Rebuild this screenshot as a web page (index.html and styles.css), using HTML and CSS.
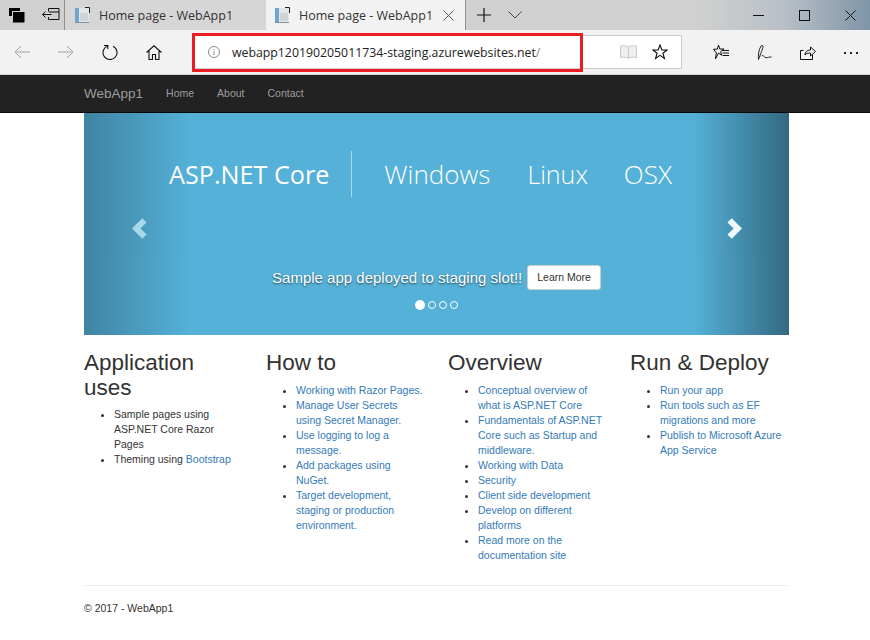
FILE: index.html

```html
<!DOCTYPE html>
<html lang="en">
<head>
    <meta charset="UTF-8">
    <title>Home page - WebApp1</title>
    <link rel="stylesheet" href="styles.css">
</head>
<body>
    <div class="tabstrip">
        <div class="strip-btns">
            <svg class="icon" width="18" height="16" viewBox="0 0 18 16"><rect x="1" y="1" width="11" height="8" fill="#000"/><path d="M4.500 4.500h12v11h-12z" fill="#000"/><path d="M4 4.500h13M4.500 4v11" stroke="#cfcfcf"/></svg>
            <svg class="icon" width="18" height="14" viewBox="0 0 18 14"><path d="M6.500 3.500V.5h10.500v11H6.500V9M7 4h10M.5 6.500h9M3.500 3.500l-3 3 3 3" fill="none" stroke="#111"/></svg>
        </div>
        <div class="tab">
            <svg class="favicon" width="16" height="16" viewBox="0 0 16 16"><rect x="1" y="1" width="14" height="14" fill="#e4e6e8"/><rect x="1" y="1" width="4" height="14" fill="#6fa6cf"/><rect x="6" y="6" width="8" height="8" fill="#cfd4d8"/><path d="M11 .5h4.500V6" fill="none" stroke="#222"/><path d="M1 15.500h14" stroke="#8a8f94"/></svg>
            <span class="tab-title">Home page - WebApp1</span>
        </div>
        <div class="tab tab-active">
            <svg class="favicon" width="16" height="16" viewBox="0 0 16 16"><rect x="1" y="1" width="14" height="14" fill="#e4e6e8"/><rect x="1" y="1" width="4" height="14" fill="#6fa6cf"/><rect x="6" y="6" width="8" height="8" fill="#cfd4d8"/><path d="M11 .5h4.500V6" fill="none" stroke="#222"/><path d="M1 15.500h14" stroke="#8a8f94"/></svg>
            <span class="tab-title">Home page - WebApp1</span>
            <svg class="tab-close" width="11" height="11" viewBox="0 0 11 11"><path d="M.5.5l10 10M10.500.5l-10 10" stroke="#555" fill="none"/></svg>
        </div>
        <div class="strip-new">
            <svg width="14" height="14" viewBox="0 0 14 14"><path d="M7 0v14M0 7h14" stroke="#111" stroke-width="1.200" fill="none"/></svg>
            <svg width="14" height="8" viewBox="0 0 14 8"><path d="M.5.500L7 7l6.500-6.500" stroke="#444" fill="none"/></svg>
        </div>
        <div class="win-btns">
            <svg width="11" height="11" viewBox="0 0 11 11"><path d="M0 5.500h11" stroke="#111"/></svg>
            <svg width="11" height="11" viewBox="0 0 11 11"><rect x=".5" y=".5" width="10" height="10" fill="none" stroke="#111"/></svg>
            <svg width="11" height="11" viewBox="0 0 11 11"><path d="M.5.500l10 10M10.500.500l-10 10" stroke="#111" fill="none"/></svg>
        </div>
    </div>

    <div class="toolbar">
        <div class="nav-btns">
            <svg width="16" height="14" viewBox="0 0 16 14"><path d="M16 7H1M7 1L1 7l6 6" fill="none" stroke="#a3a3a3"/></svg>
            <svg width="16" height="14" viewBox="0 0 16 14"><path d="M0 7h15M9 1l6 6-6 6" fill="none" stroke="#a3a3a3"/></svg>
            <svg width="16" height="16" viewBox="0 0 16 16"><path d="M5.500 2A7 7 0 1 0 11 2.200M5.800 5V1.500H2" fill="none" stroke="#111" stroke-width="1.100"/></svg>
            <svg width="16" height="15" viewBox="0 0 16 15"><path d="M.5 7.500L8 .8l7.500 6.700M3 6v8.500h3.500V9.500h3v5H13V6" fill="none" stroke="#111" stroke-width="1.100"/></svg>
        </div>
        <div class="addressbar">
            <svg class="info" width="12" height="12" viewBox="0 0 12 12"><circle cx="6" cy="6" r="5.500" fill="none" stroke="#8a8a8a"/><path d="M6 5v4M6 3v1" stroke="#8a8a8a"/></svg>
            <span class="url">webapp120190205011734-staging.azurewebsites.net<span class="url-path">/</span></span>
            <svg class="book" width="17" height="15" viewBox="0 0 17 15"><path d="M8.500 2C6.500.5 3 .5.500 1v11.500c2.500-.5 6-.5 8 1 2-1.500 5.500-1.500 8-1V1c-2.500-.5-6-.5-8 1zM8.500 2v11.500" fill="#efefef" stroke="#c8c8c8"/></svg>
            <svg class="star" width="16" height="16" viewBox="0 0 16 16"><path d="M8 1l1.900 5H15l-4.100 3.200 1.500 5.300L8 11.400l-4.400 3.100 1.500-5.300L1 6h5.100z" fill="none" stroke="#111" stroke-width="1.100"/></svg>
            <div class="highlight"></div>
        </div>
        <div class="tool-btns">
            <svg width="16" height="16" viewBox="0 0 16 16"><path d="M5.500 1l1.300 4H11L7.600 7.600l1 3.600-3.100-2.200L2.400 15l1-6L.5 5.200h3.800z" fill="none" stroke="#111"/><path d="M9 6.500h7M9.500 9H16M9.500 11.500H16" stroke="#111"/></svg>
            <svg width="15" height="15" viewBox="0 0 15 15"><path d="M1.500 14.500C1 11 1.500 5 4 1c1-1 2.500-.5 2 1-.5 2-2 6-4.500 12.500zM4.500 11c1.200-1 2-.5 2.500.5.800 1.500 3 1.500 4.500.8.800-.3 1.800-.3 3-.3" fill="none" stroke="#222"/></svg>
            <svg width="16" height="15" viewBox="0 0 16 15"><path d="M12.500 9.500v5h-12v-9h3M5 10c0-3 2-5 5.500-5V2l5 4.500-5 4.500V8C8 8 6 8.500 5 10z" fill="none" stroke="#111"/></svg>
            <svg width="14" height="3" viewBox="0 0 14 3"><path d="M0 1h2v2H0zM6 1h2v2H6zM12 1h2v2h-2z" fill="#222"/></svg>
        </div>
    </div>

    <nav class="navbar">
        <a class="brand">WebApp1</a>
        <a class="nav-link">Home</a>
        <a class="nav-link">About</a>
        <a class="nav-link">Contact</a>
    </nav>

    <div class="container">
        <div class="carousel">
            <div class="banner">
                <span class="banner-main">ASP.NET Core</span>
                <span class="banner-sep"></span>
                <span class="banner-item item-win">Windows</span>
                <span class="banner-item item-linux">Linux</span>
                <span class="banner-item">OSX</span>
            </div>
            <div class="caption">
                <span>Sample app deployed to staging slot!!</span>
                <a class="btn">Learn More</a>
            </div>
            <div class="indicators">
                <span class="dot dot-active"></span>
                <span class="dot"></span>
                <span class="dot"></span>
                <span class="dot"></span>
            </div>
            <div class="control control-left">
                <svg width="15" height="21" viewBox="0 0 16 22"><path d="M11 0l4.500 4.500L9 11l6.500 6.500L11 22 0 11z" fill="#fff"/></svg>
            </div>
            <div class="control control-right">
                <svg width="15" height="21" viewBox="0 0 16 22"><path d="M5 0L.5 4.500 7 11 .5 17.500 5 22l11-11z" fill="#fff"/></svg>
            </div>
        </div>

        <div class="columns">
            <div class="col">
                <h2>Application uses</h2>
                <ul>
                    <li>Sample pages using ASP.NET Core Razor Pages</li>
                    <li>Theming using <a>Bootstrap</a></li>
                </ul>
            </div>
            <div class="col">
                <h2>How to</h2>
                <ul>
                    <li><a>Working with Razor Pages.</a></li>
                    <li><a>Manage User Secrets using Secret Manager.</a></li>
                    <li><a>Use logging to log a message.</a></li>
                    <li><a>Add packages using NuGet.</a></li>
                    <li><a>Target development, staging or production environment.</a></li>
                </ul>
            </div>
            <div class="col">
                <h2>Overview</h2>
                <ul>
                    <li><a>Conceptual overview of what is ASP.NET Core</a></li>
                    <li><a>Fundamentals of ASP.NET Core such as Startup and middleware.</a></li>
                    <li><a>Working with Data</a></li>
                    <li><a>Security</a></li>
                    <li><a>Client side development</a></li>
                    <li><a>Develop on different platforms</a></li>
                    <li><a>Read more on the documentation site</a></li>
                </ul>
            </div>
            <div class="col">
                <h2>Run &amp; Deploy</h2>
                <ul>
                    <li><a>Run your app</a></li>
                    <li><a>Run tools such as EF migrations and more</a></li>
                    <li><a>Publish to Microsoft Azure App Service</a></li>
                </ul>
            </div>
        </div>

        <hr>
        <footer>© 2017 - WebApp1</footer>
    </div>
</body>
</html>
```

FILE: styles.css

```css
body {
    margin: 0;
    height: 640px;
    overflow: hidden;
    background: #fff;
    color: #333;
    font-family: "Liberation Sans", Arial, sans-serif;
    font-size: 10.5px;
    line-height: 15px;
}

/* browser chrome */
.tabstrip {
    display: flex;
    align-items: stretch;
    height: 30px;
    background: linear-gradient(90deg, #d0d0d0 0%, #d0d0d0 80%, #b9c0c6 90%, #7f95a8 100%);
}
.strip-btns {
    display: flex;
    align-items: center;
    gap: 16px;
    width: 64px;
    padding-left: 8px;
    box-sizing: border-box;
}
.tab {
    display: flex;
    align-items: center;
    width: 202px;
    box-sizing: border-box;
    padding-left: 9px;
    background: #d6d6d6;
    border-left: 1px solid #8f8f8f;
}
.tab-active {
    width: 200px;
    background: #f2f2f2;
    border-left: 0;
    border-right: 1px solid #8f8f8f;
    padding-left: 8px;
}
.favicon {
    margin-right: 9px;
}
.tab-title {
    color: #333;
    font-family: "Open Sans", sans-serif;
    font-size: 12.5px;
    white-space: nowrap;
}
.tab-close {
    margin-left: 10px;
}
.strip-new {
    display: flex;
    align-items: center;
    gap: 17px;
    padding-left: 11px;
}
.win-btns {
    display: flex;
    align-items: center;
    gap: 35px;
    margin-left: auto;
    padding-right: 14px;
}

.toolbar {
    display: flex;
    align-items: center;
    height: 44px;
    background: #f2f2f2;
    border-bottom: 1px solid #d2d2d2;
}
.nav-btns {
    display: flex;
    align-items: center;
    gap: 28px;
    width: 193px;
    box-sizing: border-box;
    padding-left: 14px;
}
.addressbar {
    position: relative;
    display: flex;
    align-items: center;
    width: 489px;
    height: 34px;
    box-sizing: border-box;
    padding-left: 14px;
    background: #fff;
    border: 1px solid #ccc;
}
.url {
    margin-left: 12px;
    color: #222;
    font-family: "Open Sans", sans-serif;
    font-size: 12.3px;
    white-space: nowrap;
}
.url-path {
    color: #888;
}
.book {
    margin-left: auto;
    margin-right: 15px;
}
.star {
    margin-right: 13px;
}
.highlight {
    position: absolute;
    left: -2px;
    top: -3px;
    width: 391px;
    height: 39px;
    box-sizing: border-box;
    border: 3px solid #ed1c24;
}
.tool-btns {
    display: flex;
    align-items: center;
    gap: 28px;
    padding-left: 31px;
}

.navbar {
    display: flex;
    align-items: center;
    height: 37px;
    padding-left: 84px;
    background: #222;
    border-bottom: 1px solid #080808;
}
.brand {
    margin-right: 23px;
    color: #9d9d9d;
    font-size: 13.5px;
}
.nav-link {
    margin-right: 23px;
    color: #9d9d9d;
    font-size: 10.5px;
}

/* page */
.container {
    width: 705px;
    margin-left: 84px;
}
.carousel {
    position: relative;
    display: flex;
    flex-direction: column;
    height: 222px;
    background: #55b1d8;
    color: #fff;
}
.banner {
    display: flex;
    align-items: center;
    height: 46px;
    margin-top: 38px;
    padding-left: 85px;
    font-family: "Open Sans", sans-serif;
}
.banner-main {
    font-size: 25.2px;
    font-weight: 400;
}
.banner-sep {
    width: 1px;
    height: 46px;
    margin: 0 32px 0 22px;
    background: rgba(255, 255, 255, 0.5);
}
.banner-item {
    font-size: 26px;
    font-weight: 300;
}
.item-win {
    margin-right: 37px;
}
.item-linux {
    margin-right: 36px;
    font-size: 25px;
}
.caption {
    display: flex;
    align-items: center;
    justify-content: center;
    gap: 5px;
    margin-top: 68px;
    font-size: 15px;
    text-shadow: 0 1px 2px rgba(0, 0, 0, 0.6);
}
.btn {
    padding: 4px 9px;
    background: #fff;
    border: 1px solid #ccc;
    border-radius: 3px;
    color: #333;
    font-size: 10.5px;
    text-shadow: none;
}
.indicators {
    display: flex;
    align-items: center;
    justify-content: center;
    gap: 3px;
    margin-top: 10px;
}
.dot {
    width: 6px;
    height: 6px;
    border: 1px solid #fff;
    border-radius: 50%;
}
.dot-active {
    width: 10px;
    height: 10px;
    border: 0;
    background: #fff;
}
.control {
    position: absolute;
    top: 0;
    bottom: 0;
    display: flex;
    align-items: center;
    justify-content: center;
    width: 106px;
    padding-top: 9px;
    box-sizing: border-box;
}
.control-left {
    left: 0;
    padding-left: 5px;
    opacity: 0.5;
    background: linear-gradient(90deg, rgba(0, 0, 0, 0.5), rgba(0, 0, 0, 0));
}
.control-right {
    right: 0;
    padding-right: 3px;
    opacity: 0.9;
    background: linear-gradient(90deg, rgba(0, 0, 0, 0) 10%, rgba(0, 0, 0, 0.45));
}

.columns {
    display: flex;
}
.col {
    width: 182px;
    padding-right: 24px;
    box-sizing: border-box;
}
.col:first-child h2 {
    margin-bottom: 7px;
}
.col:last-child {
    width: 159px;
    padding-right: 0;
}
h2 {
    margin: 15px 0 8px;
    color: #333;
    font-size: 22.5px;
    font-weight: 400;
    line-height: 25px;
}
ul {
    margin: 0;
    padding-left: 30px;
}
.col a {
    color: #337ab7;
}
hr {
    margin: 22px 0 15px;
    border: 0;
    border-top: 1px solid #eee;
}
```
